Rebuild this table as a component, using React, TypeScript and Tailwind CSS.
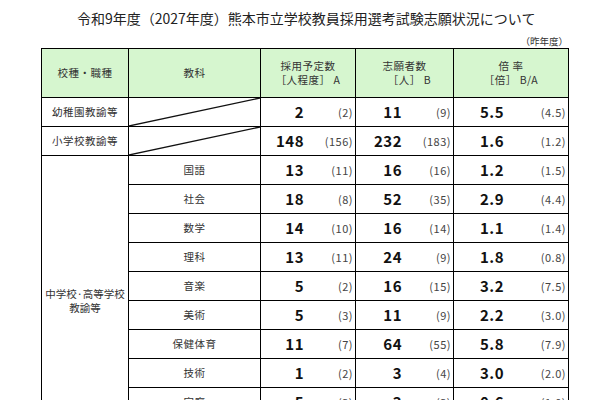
const jp = "font-['Noto_Sans_CJK_JP','Noto_Sans',sans-serif]";

type Row = { subject: string; a: string; pa: string; b: string; pb: string; r: string; pr: string };

const middle: Row[] = [
  { subject: "国語", a: "13", pa: "(11)", b: "16", pb: "(16)", r: "1.2", pr: "(1.5)" },
  { subject: "社会", a: "18", pa: "(8)", b: "52", pb: "(35)", r: "2.9", pr: "(4.4)" },
  { subject: "数学", a: "14", pa: "(10)", b: "16", pb: "(14)", r: "1.1", pr: "(1.4)" },
  { subject: "理科", a: "13", pa: "(11)", b: "24", pb: "(9)", r: "1.8", pr: "(0.8)" },
  { subject: "音楽", a: "5", pa: "(2)", b: "16", pb: "(15)", r: "3.2", pr: "(7.5)" },
  { subject: "美術", a: "5", pa: "(3)", b: "11", pb: "(9)", r: "2.2", pr: "(3.0)" },
  { subject: "保健体育", a: "11", pa: "(7)", b: "64", pb: "(55)", r: "5.8", pr: "(7.9)" },
  { subject: "技術", a: "1", pa: "(2)", b: "3", pb: "(4)", r: "3.0", pr: "(2.0)" },
  { subject: "家庭", a: "5", pa: "(3)", b: "3", pb: "(3)", r: "0.6", pr: "(1.0)" },
  { subject: "英語", a: "15", pa: "(12)", b: "30", pb: "(28)", r: "2.0", pr: "(2.3)" },
];

function NumCell({ v, p, w }: { v: string; p: string; w: string }) {
  return (
    <td className="border border-black p-0">
      <div className="flex items-center">
        <span className={`${w} text-right text-[15px] font-bold tracking-[0.5px] text-[#111]`}>{v}</span>
        <span className="ml-auto pr-[2px] text-[11px] tracking-[0.5px] text-[#444]">{p}</span>
      </div>
    </td>
  );
}

function Slash() {
  return (
    <td className="border border-black p-0 relative">
      <svg className="absolute inset-0 w-full h-full" preserveAspectRatio="none" viewBox="0 0 100 100">
        <line x1="0" y1="100" x2="100" y2="0" stroke="#111" strokeWidth="1.3" vectorEffect="non-scaling-stroke" />
      </svg>
    </td>
  );
}

function Cells({ r }: { r: Row }) {
  return (
    <>
      <NumCell v={r.a} p={r.pa} w="w-[43px]" />
      <NumCell v={r.b} p={r.pb} w="w-[46px]" />
      <NumCell v={r.r} p={r.pr} w="w-[50px]" />
    </>
  );
}

export default function App() {
  return (
    <div className={`bg-white w-[600px] min-h-[400px] ${jp} text-[#222]`}>
      <h1 className="pt-[8px] pl-[77px] text-[14px] leading-[20px] text-[#222]">
        令和9年度（2027年度）熊本市立学校教員採用選考試験志願状況について
      </h1>
      <div className="w-[568px] text-right text-[9.5px] leading-[12px] mt-[7px] mb-[1px] text-[#333]">（昨年度）</div>
      <table className="ml-[41px] border-collapse table-fixed w-[527px] text-[10.5px] text-[#333]">
        <colgroup>
          <col className="w-[87px]" />
          <col className="w-[132px]" />
          <col className="w-[95px]" />
          <col className="w-[98px]" />
          <col className="w-[115px]" />
        </colgroup>
        <thead>
          <tr className="h-[49px] bg-[#d6f6cf]">
            <th className="border border-black font-normal tracking-[0.5px]">校種・職種</th>
            <th className="border border-black font-normal tracking-[0.5px]">教科</th>
            <th className="border border-black font-normal leading-[14px] tracking-[0.5px]">
              採用予定数
              <br />
              ［人程度］ A
            </th>
            <th className="border border-black font-normal leading-[14px] tracking-[0.5px]">
              志願者数
              <br />
              <span className="pl-[10px]">［人］ B</span>
            </th>
            <th className="border border-black font-normal leading-[14px] tracking-[0.5px]">
              倍 率
              <br />
              ［倍］ B/A
            </th>
          </tr>
        </thead>
        <tbody>
          <tr className="h-[29px]">
            <td className="border border-black text-center tracking-[0.5px]">幼稚園教諭等</td>
            <Slash />
            <Cells r={{ subject: "", a: "2", pa: "(2)", b: "11", pb: "(9)", r: "5.5", pr: "(4.5)" }} />
          </tr>
          <tr className="h-[29px]">
            <td className="border border-black text-center tracking-[0.5px]">小学校教諭等</td>
            <Slash />
            <Cells r={{ subject: "", a: "148", pa: "(156)", b: "232", pb: "(183)", r: "1.6", pr: "(1.2)" }} />
          </tr>
          {middle.map((r, i) => (
            <tr key={r.subject} className="h-[29px]">
              {i === 0 && (
                <td rowSpan={middle.length} className="border border-black text-center leading-[14px] px-0">
                  中学校·高等学校
                  <br />
                  教諭等
                </td>
              )}
              <td className="border border-black text-center tracking-[0.5px]">{r.subject}</td>
              <Cells r={r} />
            </tr>
          ))}
        </tbody>
      </table>
    </div>
  );
}
